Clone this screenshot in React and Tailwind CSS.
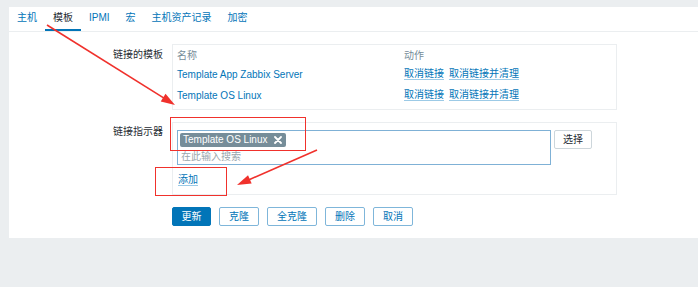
import React from 'react'

const tabs = ['主机', '模板', 'IPMI', '宏', '主机资产记录', '加密']

const templates = ['Template App Zabbix Server', 'Template OS Linux']

function LinkText({ children }) {
  return (
    <span className="text-[#0275b8] border-b border-[#9ccae6] leading-[11px] cursor-pointer">{children}</span>
  )
}

function Arrow({ x1, y1, x2, y2, head = 14, width = 4.5 }) {
  const dx = x2 - x1
  const dy = y2 - y1
  const len = Math.hypot(dx, dy)
  const ux = dx / len
  const uy = dy / len
  const bx = x2 - ux * head
  const by = y2 - uy * head
  const px = -uy * width
  const py = ux * width
  return (
    <g>
      <line x1={x1} y1={y1} x2={bx + ux * 2} y2={by + uy * 2} stroke="#f0312c" strokeWidth="1.6" />
      <polygon points={`${x2},${y2} ${bx + px},${by + py} ${bx - px},${by - py}`} fill="#f0312c" />
    </g>
  )
}

export default function App() {
  return (
    <div
      className="relative h-[287px] w-[698px] overflow-hidden bg-[#ebeef0] pt-[7px] pl-[9px] text-[10px] text-[#1f2c33]"
      style={{ fontFamily: '"Liberation Sans", "Noto Sans CJK SC", sans-serif' }}
    >
      <div className="h-[231px] bg-white">
        {/* tabs */}
        <div className="flex h-[25px] border-b border-[#ebeef0]">
          {tabs.map((t, i) => (
            <div
              key={t}
              className={`flex items-center px-[8px] leading-[12px] border-b-2 ${
                i === 1 ? 'border-[#0275b8] text-[#1f2c33]' : 'border-transparent text-[#0275b8]'
              }`}
            >
              {t}
            </div>
          ))}
        </div>

        {/* form */}
        <div className="grid grid-cols-[154px_445px] gap-x-[9px] pt-[12px]">
          {/* linked templates */}
          <div className="pt-[5px] text-right leading-[12px]">链接的模板</div>
          <div className="border border-[#ebeef0] pl-[4px] pb-[2px]">
            <div className="grid grid-cols-[227px_1fr]">
              <div className="flex h-[20px] items-center text-[#768d99]">名称</div>
              <div className="flex h-[20px] items-center text-[#768d99]">动作</div>
              {templates.map((t, i) => (
                <React.Fragment key={t}>
                  <div className={`flex items-center text-[#0275b8] ${i === 0 ? 'h-[18px]' : 'h-[24px]'}`}>{t}</div>
                  <div className={`flex items-center gap-[5px] ${i === 0 ? 'h-[18px]' : 'h-[24px]'}`}>
                    <LinkText>取消链接</LinkText>
                    <LinkText>取消链接并清理</LinkText>
                  </div>
                </React.Fragment>
              ))}
            </div>
          </div>

          {/* linked triggers */}
          <div className="mt-[12px] pt-[4px] text-right leading-[12px]">链接指示器</div>
          <div className="mt-[12px] h-[73px] border border-[#ebeef0] pl-[4px] pt-[7px]">
            <div className="flex items-start gap-[3px]">
              <div className="h-[35px] w-[374px] border border-[#7fb1d6] px-[2px] pt-[1px]">
                <div className="inline-flex h-[14px] items-center gap-[6px] rounded-[2px] bg-[#768d99] pl-[3px] pr-[4px] text-white leading-[12px]">
                  <span>Template OS Linux</span>
                  <svg width="8" height="8" viewBox="0 0 8 8">
                    <path d="M1 1L7 7M7 1L1 7" stroke="white" strokeWidth="1.8" strokeLinecap="round" />
                  </svg>
                </div>
                <div className="mt-[4px] pl-[1px] leading-[12px] text-[#9aa6ad]">在此输入搜索</div>
              </div>
              <button className="flex h-[19px] w-[38px] items-center justify-center rounded-[2px] border border-[#cdd6db] bg-white text-[#1f2c33] leading-[12px]">
                选择
              </button>
            </div>
            <div className="mt-[9px] pl-[1px] leading-[12px]">
              <LinkText>添加</LinkText>
            </div>
          </div>

          {/* buttons */}
          <div />
          <div className="mt-[12px] flex gap-[8px]">
            <button className="flex h-[19px] w-[39px] items-center justify-center rounded-[2px] border border-[#0275b8] bg-[#0275b8] text-white leading-[12px]">
              更新
            </button>
            {['克隆', '全克隆', '删除', '取消'].map((b) => (
              <button
                key={b}
                className={`flex h-[19px] items-center justify-center rounded-[2px] border border-[#7fb6da] bg-white text-[#0275b8] leading-[12px] ${
                  b === '全克隆' ? 'w-[50px]' : 'w-[40px]'
                }`}
              >
                {b}
              </button>
            ))}
          </div>
        </div>
      </div>

      {/* red annotations */}
      <div className="pointer-events-none absolute inset-0">
        <div className="absolute left-[170px] top-[117px] h-[34px] w-[136px] border border-[#f0312c]" />
        <div className="absolute left-[155px] top-[167px] h-[29px] w-[72px] border border-[#f0312c]" />
        <svg className="absolute left-0 top-0" width="698" height="287">
          <Arrow x1={47} y1={25} x2={175} y2={105} />
          <Arrow x1={317} y1={150} x2={237} y2={185} />
        </svg>
      </div>
    </div>
  )
}
